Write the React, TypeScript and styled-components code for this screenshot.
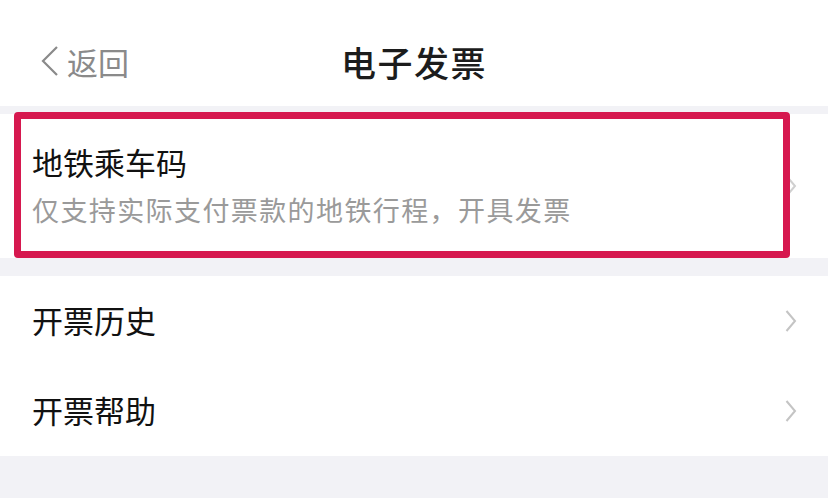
import styled, { createGlobalStyle } from 'styled-components';

const GlobalStyle = createGlobalStyle`
	html, body {
		margin: 0;
		padding: 0;
		background: #f2f2f6;
		font-family: "Noto Sans CJK SC", "Noto Sans", sans-serif;
	}
`

const Page = styled.div`
	width: 828px;
	height: 498px;
	background: #f2f2f6;
	overflow: hidden;
`

const NavBar = styled.header`
	height: 106px;
	box-sizing: border-box;
	padding-top: 16px;
	background: #ffffff;
	display: grid;
	grid-template-columns: 1fr auto 1fr;
	align-items: center;
	margin-bottom: 8px;
`

const Back = styled.div`
	display: flex;
	align-items: center;
	padding-left: 40px;
	color: #8a8a8a;
	font-size: 31px;
	gap: 7px;
`

const Title = styled.h1`
	margin: 0;
	font-size: 35px;
	font-weight: 500;
	color: #1c1c1c;
	letter-spacing: 1.5px;
`

const Card = styled.section`
	position: relative;
	background: #ffffff;
	height: 144px;
	margin-bottom: 18px;
	display: flex;
	align-items: center;
	padding: 0 31px 0 32px;
	box-sizing: border-box;
`

const Highlight = styled.div`
	position: absolute;
	left: 14px;
	top: -2px;
	width: 776px;
	height: 146px;
	box-sizing: border-box;
	border: 7px solid #d6184f;
	border-radius: 4px;
	pointer-events: none;
`

const Texts = styled.div`
	flex: 1;
	display: flex;
	flex-direction: column;
	gap: 12px;
	padding-bottom: 2px;
`

const ItemTitle = styled.div`
	font-size: 31px;
	color: #111;
	line-height: 38px;
`

const ItemDesc = styled.div`
	font-size: 27px;
	color: #9a9a9a;
	line-height: 34px;
	letter-spacing: 1.4px;
`

const List = styled.div`
	background: #ffffff;
`

const Row = styled.div`
	height: 90px;
	display: flex;
	align-items: center;
	padding: 0 31px 0 32px;
`

const RowLabel = styled.div`
	flex: 1;
	font-size: 31px;
	color: #111;
	padding-bottom: 4px;
`

const Chevron = ({ color = '#c4c4c4' }: { color?: string }) => (
	<svg width="12" height="24" viewBox="0 0 12 24">
		<path d="M1.5 2 L10 12 L1.5 22" fill="none" stroke={color} strokeWidth="2" />
	</svg>
)

function App() {
	return (
		<Page>
			<GlobalStyle />
			<NavBar>
				<Back>
					<svg width="20" height="32" viewBox="0 0 20 32">
						<path d="M17 2 L3 16 L17 30" fill="none" stroke="#8a8a8a" strokeWidth="2.2" />
					</svg>
					<span>返回</span>
				</Back>
				<Title>电子发票</Title>
				<div />
			</NavBar>
			<Card>
				<Texts>
					<ItemTitle>地铁乘车码</ItemTitle>
					<ItemDesc>仅支持实际支付票款的地铁行程，开具发票</ItemDesc>
				</Texts>
				<Chevron color="#d0d0d0" />
				<Highlight />
			</Card>
			<List>
				<Row>
					<RowLabel>开票历史</RowLabel>
					<Chevron />
				</Row>
				<Row>
					<RowLabel>开票帮助</RowLabel>
					<Chevron />
				</Row>
			</List>
		</Page>
	)
}

export default App;
